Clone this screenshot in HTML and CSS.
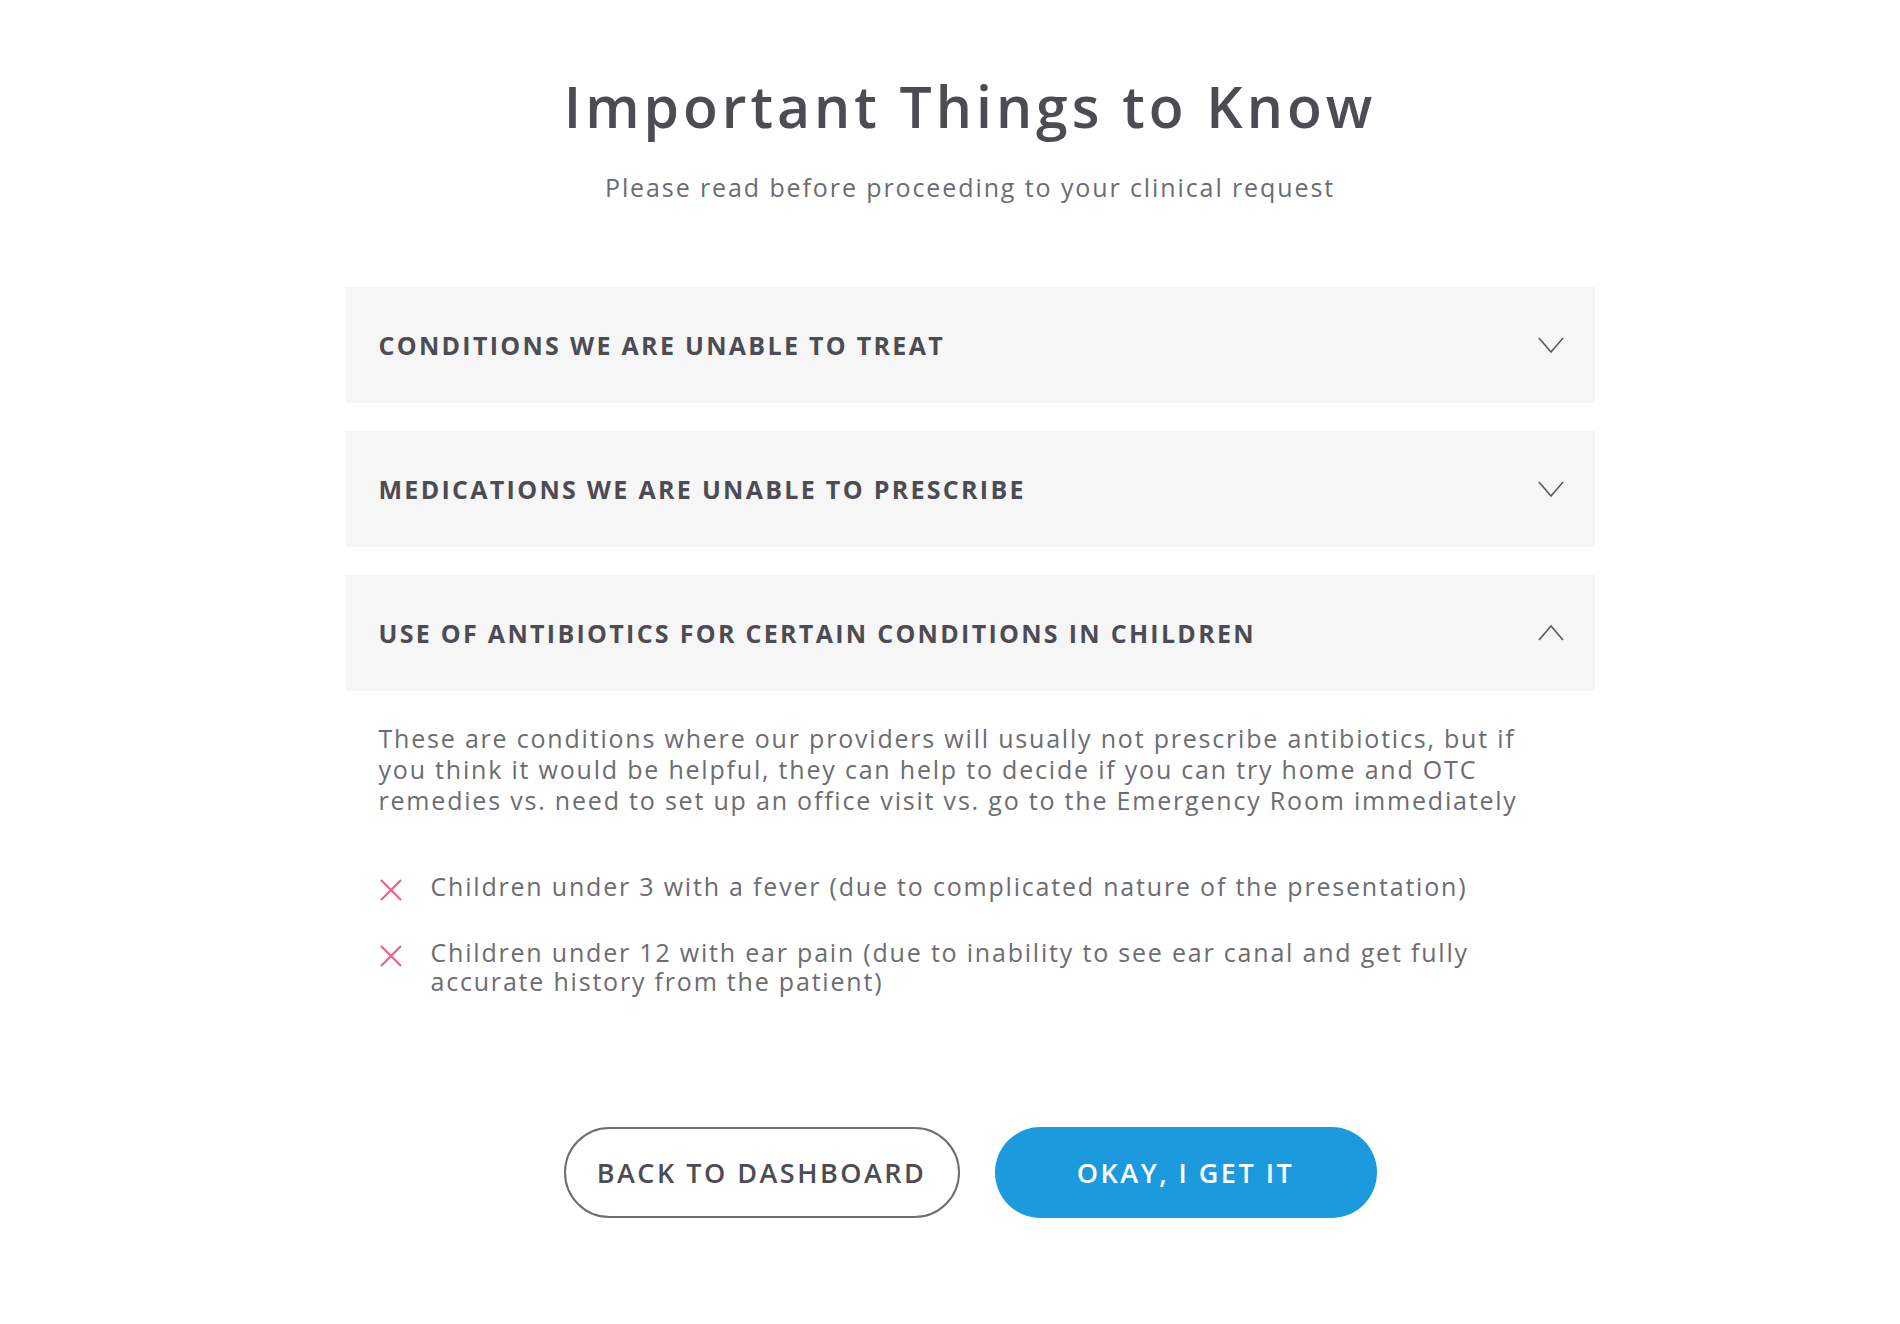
FILE: index.html
```html
<!doctype html>
<html lang="en">
  <head>
    <meta charset="UTF-8" />
    <meta name="viewport" content="width=device-width, initial-scale=1.0" />
    <title>Important Things to Know</title>
    <link rel="stylesheet" href="styles.css">
  </head>
  <body>
    <div class="page">
      <h1 class="page_title">Important Things to Know</h1>
      <p class="page_subtitle">Please read before proceeding to your clinical request</p>

      <div class="accordion">
        <div class="accordion_item">
          <div class="accordion_header">
            <span>CONDITIONS WE ARE UNABLE TO TREAT</span>
            <svg class="chevron" viewBox="0 0 26 20"><path d="M1 3 L13 17 L25 3" /></svg>
          </div>
        </div>

        <div class="accordion_item">
          <div class="accordion_header">
            <span>MEDICATIONS WE ARE UNABLE TO PRESCRIBE</span>
            <svg class="chevron" viewBox="0 0 26 20"><path d="M1 3 L13 17 L25 3" /></svg>
          </div>
        </div>

        <div class="accordion_item open">
          <div class="accordion_header">
            <span>USE OF ANTIBIOTICS FOR CERTAIN CONDITIONS IN CHILDREN</span>
            <svg class="chevron" viewBox="0 0 26 20"><path d="M1 17 L13 3 L25 17" /></svg>
          </div>
          <div class="accordion_body">
            <p class="body_text">
              These are conditions where our providers will usually not prescribe antibiotics, but if
              you think it would be helpful, they can help to decide if you can try home and OTC
              remedies vs. need to set up an office visit vs. go to the Emergency Room immediately
            </p>
            <ul class="x_list">
              <li>
                <svg class="x_icon" viewBox="0 0 24 24"><path d="M2 2 L22 22 M22 2 L2 22" /></svg>
                <span>Children under 3 with a fever (due to complicated nature of the presentation)</span>
              </li>
              <li>
                <svg class="x_icon" viewBox="0 0 24 24"><path d="M2 2 L22 22 M22 2 L2 22" /></svg>
                <span>Children under 12 with ear pain (due to inability to see ear canal and get fully accurate history from the patient)</span>
              </li>
            </ul>
          </div>
        </div>
      </div>

      <div class="button_row">
        <button class="btn btn_outline">BACK TO DASHBOARD</button>
        <button class="btn btn_primary">OKAY, I GET IT</button>
      </div>
    </div>
  </body>
</html>
```

FILE: styles.css
```css
:root {
  --font-family-base: "Open Sans", sans-serif;
  --text-dark: #4c4c52;
  --text-muted: #6c6c71;
  --panel-bg: #f6f6f6;
  --accent-blue: #1b9ade;
  --accent-pink: #ef5b84;
}

html {
  font-family: var(--font-family-base);
}
body {
  margin: 0;
  background-color: #ffffff;
}

.page {
  display: flex;
  flex-direction: column;
  align-items: center;
  padding: 72px 0 100px 40px;
}

.page_title {
  margin: 0;
  font-size: 57px;
  line-height: 68px;
  font-weight: 600;
  color: var(--text-dark);
  letter-spacing: 4px;
}
.page_subtitle {
  margin: 32px 0 0;
  font-size: 25px;
  line-height: 30px;
  color: var(--text-muted);
  letter-spacing: 1.9px;
}

/* accordion */
.accordion {
  width: 1249px;
  margin-top: 85px;
  display: flex;
  flex-direction: column;
  gap: 28px;
}
.accordion_header {
  height: 116px;
  display: flex;
  align-items: center;
  justify-content: space-between;
  padding: 0 31px 0 33px;
  background-color: var(--panel-bg);
  font-size: 25px;
  font-weight: 700;
  color: var(--text-dark);
  letter-spacing: 2.3px;
}
.chevron {
  width: 26px;
  height: 20px;
}
.chevron path {
  fill: none;
  stroke: #58585e;
  stroke-width: 1.6;
}

.accordion_body {
  padding: 32px 33px 0;
}
.body_text {
  margin: 0;
  padding-right: 12px;
  font-size: 25px;
  line-height: 31px;
  color: var(--text-muted);
  letter-spacing: 1.8px;
}

.x_list {
  list-style: none;
  margin: 56px 0 0;
  padding: 0;
  display: flex;
  flex-direction: column;
  gap: 36px;
}
.x_list li {
  display: flex;
  align-items: flex-start;
  gap: 28px;
  font-size: 25px;
  line-height: 29px;
  color: var(--text-muted);
  letter-spacing: 1.8px;
}
.x_icon {
  flex: none;
  width: 24px;
  height: 24px;
  margin-top: 6px;
}
.x_icon path {
  fill: none;
  stroke: var(--accent-pink);
  stroke-width: 2;
}

/* buttons */
.button_row {
  display: flex;
  gap: 35px;
  margin-top: 131px;
}
.btn {
  height: 91px;
  border-radius: 46px;
  font-family: var(--font-family-base);
  font-size: 27px;
  font-weight: 600;
  letter-spacing: 2.5px;
  cursor: pointer;
}
.btn_outline {
  width: 396px;
  background-color: #ffffff;
  border: 2px solid #6e6e72;
  color: var(--text-dark);
}
.btn_primary {
  width: 382px;
  background-color: var(--accent-blue);
  border: none;
  color: #ffffff;
}
```
